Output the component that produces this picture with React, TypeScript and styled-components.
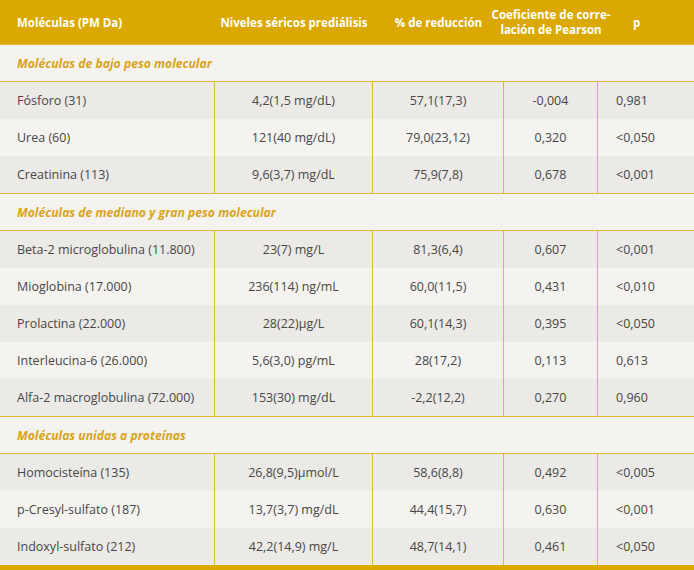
import React from "react";
import styled, { createGlobalStyle } from "styled-components";

const Global = createGlobalStyle`
  html, body { margin: 0; padding: 0; background: #ffffff; }
  body { font-family: "Open Sans", Lato, sans-serif; }
`;

const COLS = "215px 158px 131px 94px 96px";
const GOLD = "#dba800";
const LINE = "#e2b534";

const Table = styled.div`
  width: 694px;
  display: flex;
  flex-direction: column;
  border-bottom: 6px solid ${GOLD};
`;

const HeaderRow = styled.div`
  display: grid;
  grid-template-columns: ${COLS};
  height: 44px;
  background: ${GOLD};
  color: #ffffff;
  font-weight: 700;
  font-size: 11.5px;
  line-height: 15px;
`;

const HeadCell = styled.div<{ $align?: "left" | "center"; $pad?: number }>`
  display: flex;
  align-items: center;
  justify-content: ${(p) => (p.$align === "left" ? "flex-start" : "center")};
  padding-left: ${(p) => p.$pad ?? 0}px;
  text-align: center;
  white-space: nowrap;
  overflow: visible;
`;

const SectionRow = styled.div`
  height: 37px;
  box-sizing: border-box;
  display: flex;
  align-items: center;
  padding-left: 17px;
  background: #f4f3f0;
  border-bottom: 1px solid ${LINE};
  color: #d9a41c;
  font-weight: 700;
  font-style: italic;
  font-size: 12.2px;
`;

const SectionWrap = styled.div`
  border-top: 1px solid ${LINE};
  &:first-of-type { border-top: none; }
`;

const DataRow = styled.div<{ $dark: boolean }>`
  display: grid;
  grid-template-columns: ${COLS};
  height: 37px;
  background: ${(p) => (p.$dark ? "#ebeae7" : "#f4f3f0")};
  color: #474747;
  font-size: 12.5px;
`;

const Cell = styled.div<{ $align: "left" | "center"; $pad?: number }>`
  display: flex;
  align-items: center;
  justify-content: ${(p) => (p.$align === "left" ? "flex-start" : "center")};
  padding-left: ${(p) => p.$pad ?? 0}px;
  border-right: 1px solid ${LINE};
  box-sizing: border-box;
  white-space: nowrap;
  &:last-child { border-right: none; }
`;

type Row = [string, string, string, string, string];

const groups: { title: string; rows: Row[] }[] = [
  {
    title: "Moléculas de bajo peso molecular",
    rows: [
      ["Fósforo (31)", "4,2(1,5 mg/dL)", "57,1(17,3)", "-0,004", "0,981"],
      ["Urea (60)", "121(40 mg/dL)", "79,0(23,12)", "0,320", "<0,050"],
      ["Creatinina (113)", "9,6(3,7) mg/dL", "75,9(7,8)", "0,678", "<0,001"],
    ],
  },
  {
    title: "Moléculas de mediano y gran peso molecular",
    rows: [
      ["Beta-2 microglobulina (11.800)", "23(7) mg/L", "81,3(6,4)", "0,607", "<0,001"],
      ["Mioglobina (17.000)", "236(114) ng/mL", "60,0(11,5)", "0,431", "<0,010"],
      ["Prolactina (22.000)", "28(22)\u00b5g/L", "60,1(14,3)", "0,395", "<0,050"],
      ["Interleucina-6 (26.000)", "5,6(3,0) pg/mL", "28(17,2)", "0,113", "0,613"],
      ["Alfa-2 macroglobulina (72.000)", "153(30) mg/dL", "-2,2(12,2)", "0,270", "0,960"],
    ],
  },
  {
    title: "Moléculas unidas a proteínas",
    rows: [
      ["Homocisteína (135)", "26,8(9,5)\u00b5mol/L", "58,6(8,8)", "0,492", "<0,005"],
      ["p-Cresyl-sulfato (187)", "13,7(3,7) mg/dL", "44,4(15,7)", "0,630", "<0,001"],
      ["Indoxyl-sulfato (212)", "42,2(14,9) mg/L", "48,7(14,1)", "0,461", "<0,050"],
    ],
  },
];

export default function App() {
  return (
    <>
      <Global />
      <Table>
        <HeaderRow>
          <HeadCell $align="left" $pad={17}>Moléculas (PM Da)</HeadCell>
          <HeadCell>Niveles séricos prediálisis</HeadCell>
          <HeadCell>% de reducción</HeadCell>
          <HeadCell>
            Coeficiente de corre-
            <br />
            lación de Pearson
          </HeadCell>
          <HeadCell $align="left" $pad={35}>p</HeadCell>
        </HeaderRow>
        {groups.map((g, gi) => (
          <SectionWrap key={gi}>
            <SectionRow>{g.title}</SectionRow>
            {g.rows.map((r, ri) => (
              <DataRow key={ri} $dark={ri % 2 === 0}>
                <Cell $align="left" $pad={17}>{r[0]}</Cell>
                <Cell $align="center">{r[1]}</Cell>
                <Cell $align="center">{r[2]}</Cell>
                <Cell $align="center">{r[3]}</Cell>
                <Cell $align="left" $pad={18}>{r[4]}</Cell>
              </DataRow>
            ))}
          </SectionWrap>
        ))}
      </Table>
    </>
  );
}
